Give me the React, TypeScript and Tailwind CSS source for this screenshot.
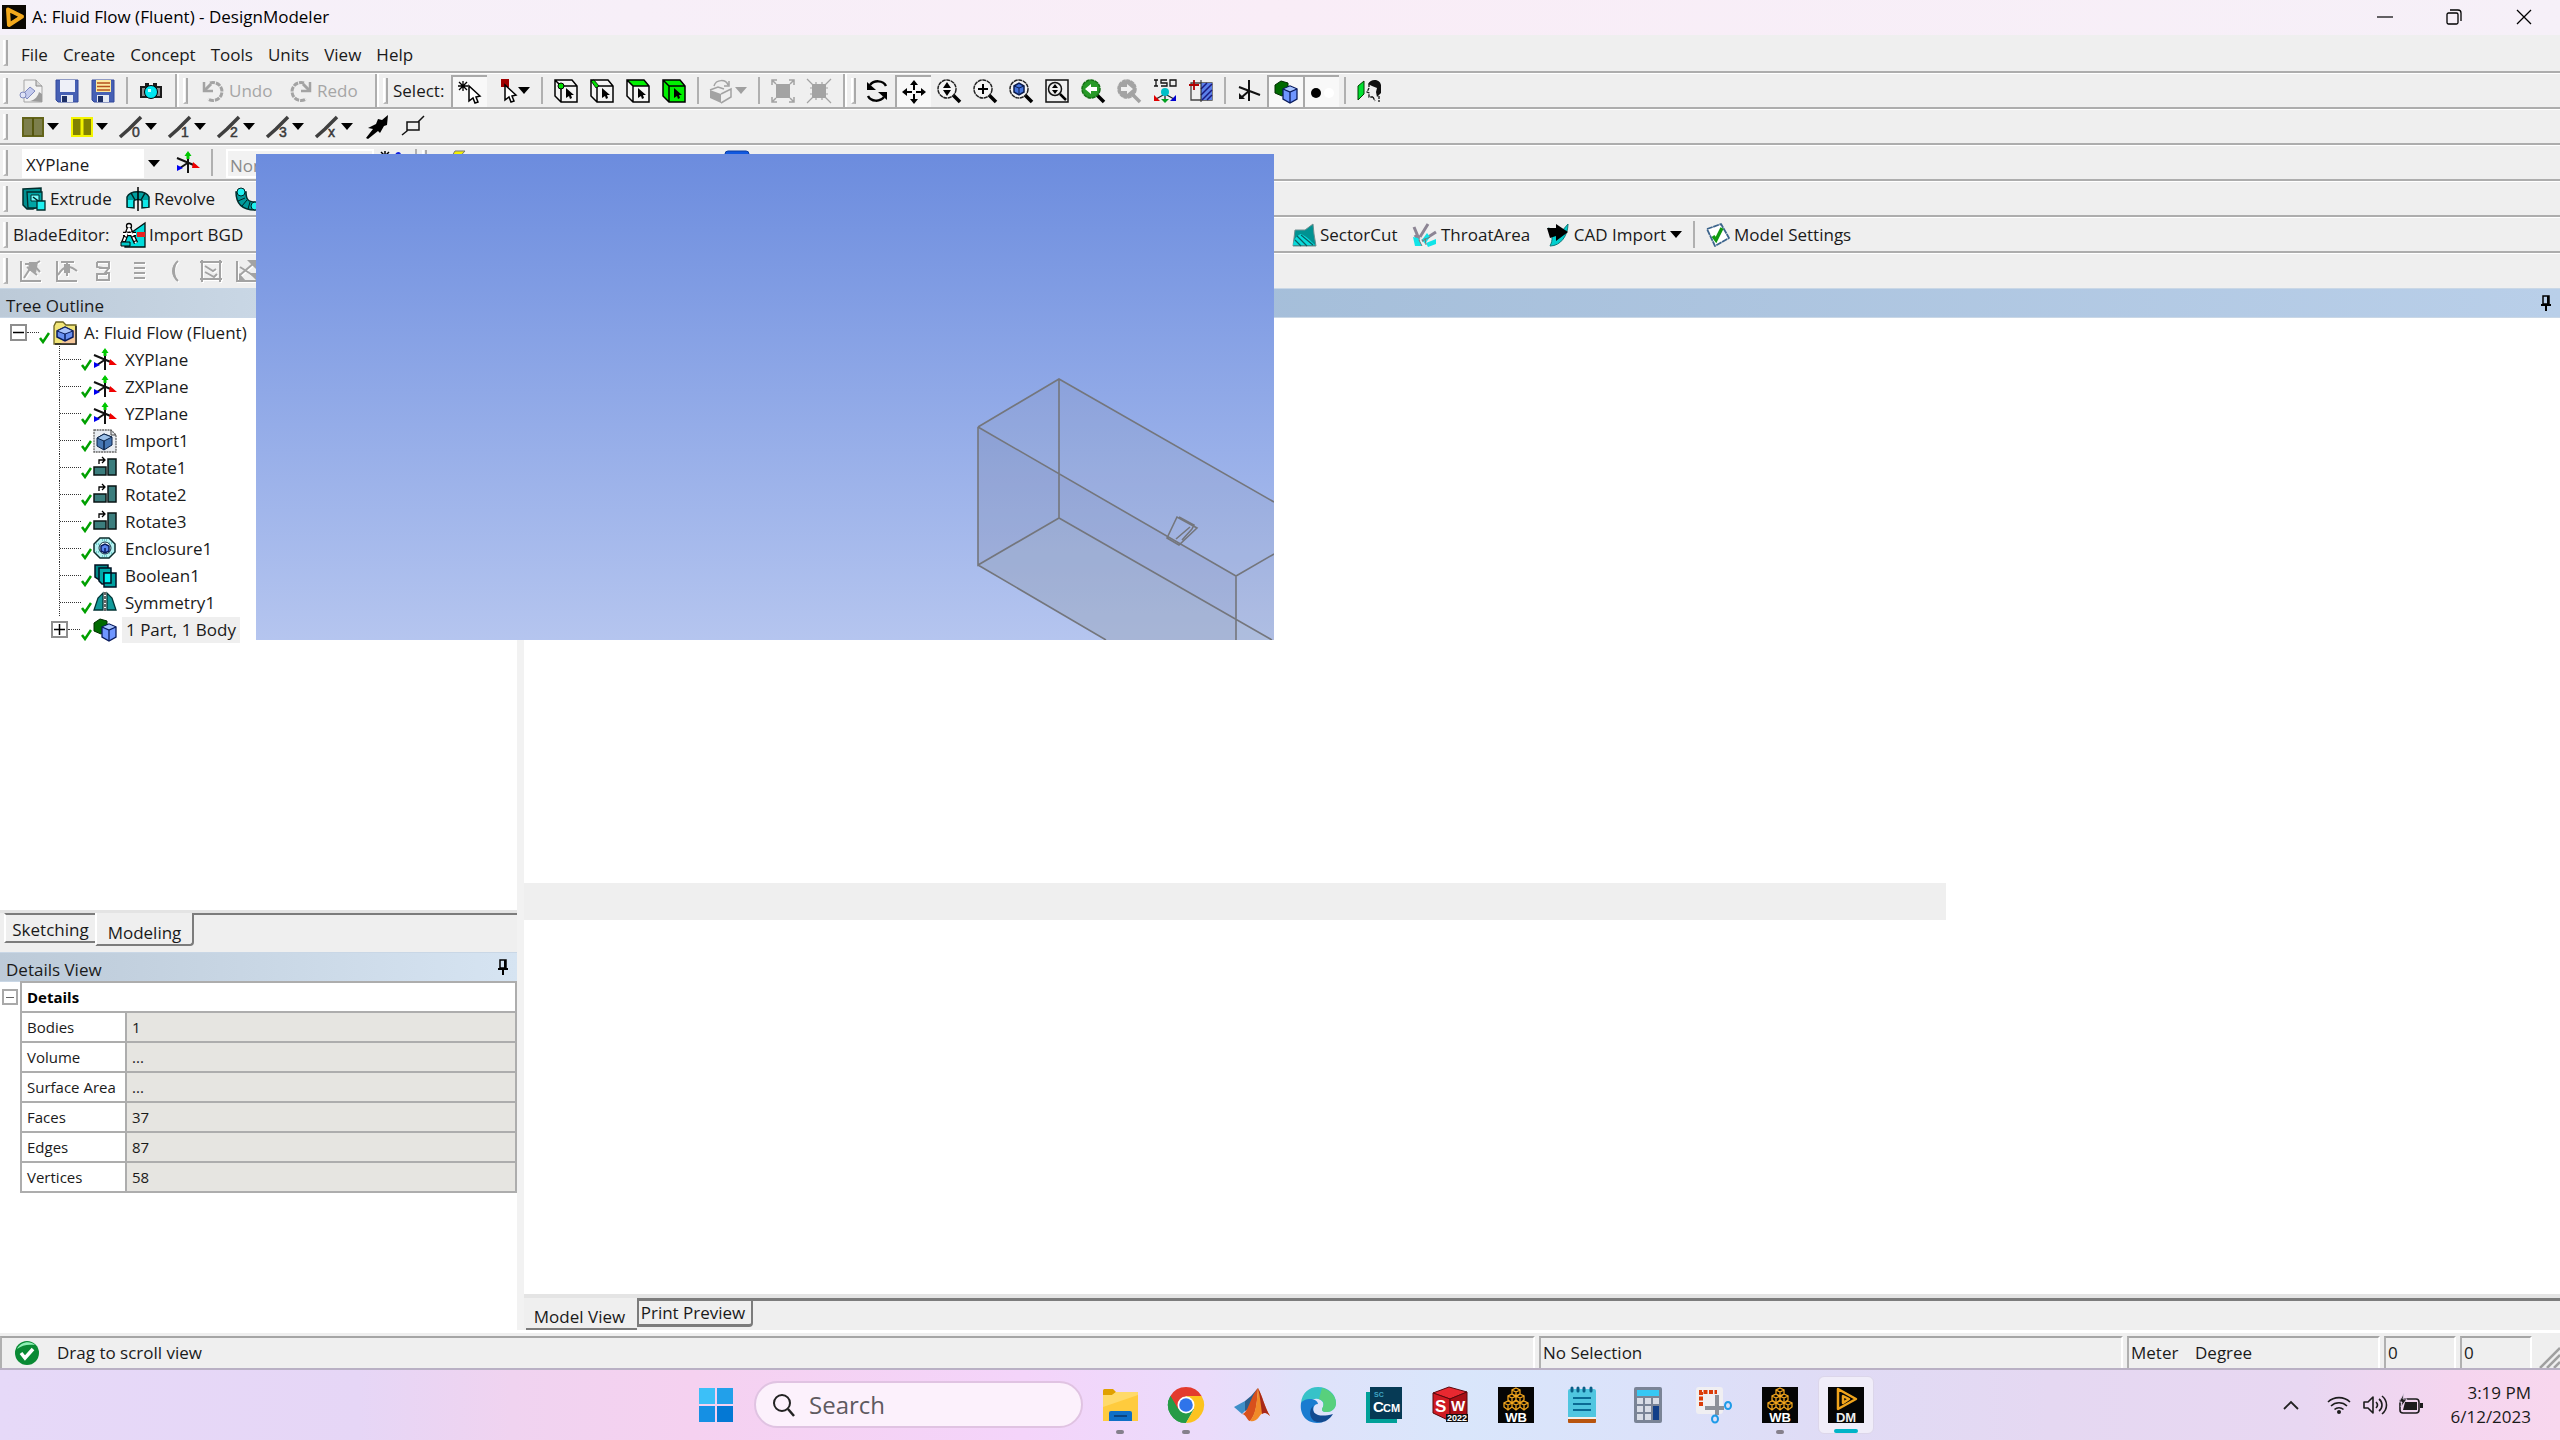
import React from 'react';

type Kids = { children?: React.ReactNode };

const Ico = ({ children, size = 'w-6 h-6', vb = '0 0 24 24' }: Kids & { size?: string; vb?: string }) => (
  <svg viewBox={vb} className={`${size} shrink-0 overflow-visible`} fill="none" aria-hidden="true">
    {children}
  </svg>
);

/* ---------- toolbar primitives ---------- */

const Grip = () => <span className="h-[26px] w-[5px] shrink-0 border-r-2 border-b-2 border-l-2 border-r-[#a9a9a9] border-b-[#b9b9b9] border-l-white" />;

const Sep = () => (
  <span className="flex w-3 shrink-0 justify-center">
    <span className="h-[27px] w-[2px] bg-[#b0b0b0]" />
  </span>
);

const GroupEnd = () => <span className="mr-1 h-[33px] w-[4px] shrink-0 border-x-2 border-l-[#adadad] border-r-white" />;

const Caret = ({ dim }: { dim?: boolean }) => (
  <svg viewBox="0 0 12 7" className="h-[7px] w-3 shrink-0" aria-hidden="true">
    <path d="M0 0h12L6 7z" fill={dim ? '#a0a0a0' : '#000'} />
  </svg>
);

const Btn = ({ label, on, children }: Kids & { label: string; on?: boolean }) => (
  <button
    type="button"
    aria-label={label}
    aria-pressed={on}
    className={`flex w-9 shrink-0 items-center justify-center ${on ? 'h-[32px] border-t-2 border-l-2 border-[#a9a9a9] bg-[#f8f8f8]' : 'h-[32px]'}`}
  >
    {children}
  </button>
);

const Drop = ({ label, dim, children }: Kids & { label: string; dim?: boolean }) => (
  <button type="button" aria-label={label} className="flex h-[32px] w-[49px] shrink-0 items-center gap-[2px] pl-[5px]">
    {children}
    <Caret dim={dim} />
  </button>
);

const Tool = ({ text, w, dim, children }: Kids & { text: string; w: string; dim?: boolean }) => (
  <button type="button" className={`flex h-[32px] shrink-0 items-center gap-1 whitespace-nowrap ${w} ${dim ? 'text-[#a6a6a6]' : ''}`}>
    {children}
    <span>{text}</span>
  </button>
);

const Row = ({ children }: Kids) => (
  <div className="flex h-9 shrink-0 items-center border-t border-b-2 border-t-white border-b-[#adadad] bg-[#efefef] pl-[3px]">{children}</div>
);

/* ---------- icons ---------- */

const DmLogo = () => (
  <Ico>
    <path d="M0 0h24v24H0z" fill="#0b0802" />
    <path d="M6 4.500 20 11.500 7 20z" stroke="#f3a81c" strokeWidth="4" strokeLinejoin="round" />
    <path d="M10 9v6l5-3z" fill="#0b0802" />
  </Ico>
);

const Floppy = ({ lines }: { lines?: boolean }) => (
  <Ico>
    <path d="M1 1h22v22H3l-2-2z" fill="#4660b4" stroke="#32489c" />
    <path d="M5 1h15v12H5z" fill={lines ? '#fbe9a0' : '#eef0f8'} />
    {lines && <path d="M6 4h13M6 7.500h13M6 11h13" stroke="#b4501e" strokeWidth="1.500" />}
    <path d="M6 16h12v7H6z" fill="#e4e9f4" />
    <path d="M7 17h5v6H7z" fill="#1d2f66" />
  </Ico>
);

const NewDoc = () => (
  <Ico>
    <path d="M5 1h12l6 6v16H5z" fill="#f1f1f1" stroke="#a5a5a5" />
    <path d="M17 1v6h6" fill="#d6d6d6" stroke="#8a8a8a" />
    <path d="M11 22c5-1 8-5 9-9l3 2v8z" fill="#9b9b9b" />
    <path d="m4 15 7-7 5 4-8 8z" fill="#c4cbee" stroke="#8089be" strokeLinejoin="round" />
    <circle cx="4" cy="16" r="3" fill="#dfe3f7" stroke="#8089be" />
  </Ico>
);

const Camera = () => (
  <Ico>
    <path d="M1 7h5V4h4v3h4V4h4v3h5v12H1z" fill="#1b1b1b" />
    <path d="M3 9h3v8H3zM18 9h3v8h-3z" fill="#8c8c8c" />
    <circle cx="12" cy="13" r="6.500" fill="#00e6f0" stroke="#000" />
    <path d="M9 10h3v3H9z" fill="#c8ffff" />
  </Ico>
);

const Undo = ({ flip }: { flip?: boolean }) => (
  <Ico>
    <g transform={flip ? 'matrix(-1 0 0 1 24 0)' : undefined} stroke="#a3a3a3">
      <path d="M9 4a9 9 0 1 1-2 16" strokeWidth="3" strokeDasharray="5 1" />
      <path d="M3 3v9h9" strokeWidth="2.500" />
      <path d="m3 12 7-7" strokeWidth="3" />
    </g>
  </Ico>
);

const Cursor = () => <path d="M11 6v15l4-3 2 5 3-1-2-5 4-1z" fill="#fff" stroke="#000" strokeWidth="1.500" />;

const StarCursor = () => (
  <Ico>
    <path d="M5 1v10M0 6h10M1 2l8 8M9 2l-8 8" stroke="#000" strokeWidth="1.300" />
    <Cursor />
  </Ico>
);
const BoxCursor = () => (
  <Ico>
    <path d="M9 0h8v8H9z" fill="#a00000" />
    <g transform="translate(2 0)">
      <Cursor />
    </g>
  </Ico>
);

const SelCube = ({ mode }: { mode: number }) => (
  <Ico>
    <path d="M1 1h17l5 6v16H7l-6-6z" fill={mode === 3 ? '#00f000' : '#f4f4f4'} />
    {mode === 2 && <path d="M1 1h17l5 6H7z" fill="#00f000" />}
    <path d="M1 1h17l5 6v16H7l-6-6zM7 23V7h16M1 1l6 6" stroke="#000" strokeWidth="1.500" />
    {mode === 0 && <circle cx="7" cy="7" r="3" fill="#00e000" stroke="#000" />}
    {mode === 1 && <path d="m1 2 3-1 5 6-3 2z" fill="#00e000" stroke="#000" strokeWidth=".8" />}
    <path d="M12 9v10l3-2 1 3 2-1-1-3h3z" fill="#000" />
  </Ico>
);

const GrayCube = () => (
  <Ico>
    <path d="M5 7c2-7 12-7 14-1m1-4v5h-5" stroke="#a3a3a3" strokeWidth="1.500" />
    <path d="m1 11 11 4v9L1 19z" fill="#a3a3a3" />
    <path d="m12 15 10-5v8l-10 6M1 11l8-3 6 2" stroke="#a3a3a3" strokeWidth="1.500" />
  </Ico>
);
const ExpandSq = () => (
  <Ico>
    <path d="M5 5h14v14H5z" fill="#a3a3a3" />
    <path d="M1 6V1h5M18 1h5v5M23 18v5h-5M6 23H1v-5M1 1l4 4M23 1l-4 4M1 23l4-4M23 23l-4-4" stroke="#a3a3a3" strokeWidth="1.500" />
  </Ico>
);
const ShrinkSq = () => (
  <Ico>
    <path d="M5 5h14v14H5z" fill="#a3a3a3" />
    <path d="M0 0l6 6M24 0l-6 6M0 24l6-6M24 24l-6-6M9 3v3M15 3v3M9 18v3M15 18v3M3 9h3M3 15h3M18 9h3M18 15h3" stroke="#a3a3a3" strokeWidth="1.200" />
  </Ico>
);

const RotateIc = () => (
  <Ico>
    <path d="M21 7C18 1 9 1 5 6" stroke="#000" strokeWidth="2.500" />
    <path d="M2 3v8h9z" fill="#000" />
    <path d="M3 17c3 6 12 6 16 1" stroke="#000" strokeWidth="2.500" />
    <path d="M22 21v-8h-9z" fill="#000" />
  </Ico>
);
const PanIc = () => (
  <Ico>
    <path d="M12 4v6M12 14v6M4 12h6M14 12h6" stroke="#000" strokeWidth="2" />
    <path d="m12 0 4 5H8zM12 24l4-5H8zM0 12l5-4v8zM24 12l-5-4v8z" fill="#000" />
  </Ico>
);
const Lens = ({ children, fill = '#f4f4f4', rim = '#222', handle = '#000' }: Kids & { fill?: string; rim?: string; handle?: string }) => (
  <Ico>
    <path d="m16 16 7 7" stroke={handle} strokeWidth="3.500" />
    <circle cx="10" cy="10" r="9" fill={fill} stroke={rim} strokeWidth="1.500" strokeDasharray="4 .6" />
    {children}
  </Ico>
);
const FitIc = () => (
  <Ico>
    <path d="M1 1h22v22H1z" stroke="#111" strokeWidth="1.500" />
    <circle cx="10" cy="10" r="6.500" stroke="#111" strokeWidth="1.500" />
    <path d="m15 15 6 6" stroke="#000" strokeWidth="2.500" />
    <path d="m10 5 3 4H7zM10 15l3-4H7z" fill="#000" />
  </Ico>
);
const IsoIc = () => (
  <Ico>
    <path d="M1 1h4M3 1v6M1 7h4M14 1H8v3h6v3H8M17 1h6v6h-6z" stroke="#111" strokeWidth="1.300" />
    <path d="m12 15-9 5M12 15l9 5M12 15v7" stroke="#222" strokeWidth="1.300" />
    <path d="M1 16v6h6z" fill="#e00000" />
    <path d="M23 16v6h-6z" fill="#0000d0" />
    <path d="M8 20h8l-4 4z" fill="#00a020" />
    <circle cx="12" cy="13" r="4" fill="#00c0c8" />
  </Ico>
);
const SectionIc = () => (
  <Ico>
    <path d="M2 4h21v17H2z" stroke="#444" strokeWidth="1.300" />
    <path d="M12 4h11v17H12z" fill="#5a7fe8" />
    <path d="m12 10 6-6M12 16 23 5M13 21 23 11M18 21l5-5" stroke="#1a1a80" strokeWidth="1.500" />
    <path d="M12 1v22" stroke="#222" />
    <path d="M0 6h10M5 1v10" stroke="#b00000" strokeWidth="1.800" />
  </Ico>
);
const AxesIc = () => (
  <Ico>
    <path d="M12 1v21M2 8l21 8M13 11 5 18" stroke="#111" strokeWidth="2" />
    <path d="M2 20v-6l6 6z" fill="#111" />
  </Ico>
);
const TriadIc = () => (
  <Ico>
    <path d="M12 4v18M1 7l19 8M13 11 4 17" stroke="#111" strokeWidth="2" />
    <path d="M12 0 8.500 5h7z" fill="#00c800" />
    <path d="M10.500 2h3v6h-3z" fill="#00c800" />
    <path d="m17 11 7 6h-8z" fill="#f00000" />
    <path d="M1 20v-6l6 3z" fill="#0000f0" />
  </Ico>
);
const BodyIc = () => (
  <Ico>
    <path d="m1 5 6-4 7 2v9l-6 4-7-3z" fill="#006a00" stroke="#002c00" />
    <path d="m9 9 7-3 7 3v10l-7 4-7-4z" fill="#6f96ff" stroke="#0a1c5e" strokeWidth="1.300" />
    <path d="m10 9 6-2.500L22 9l-6 2.500z" fill="#a8c4ff" />
    <path d="m9 9 7 3 7-3M16 12v11" stroke="#0a1c5e" strokeWidth="1.300" />
  </Ico>
);
const DotIc = () => (
  <Ico>
    <circle cx="6" cy="13" r="5" fill="#000" />
    <circle cx="19" cy="13" r="5" fill="#fff" />
  </Ico>
);
const LookIc = () => (
  <Ico>
    <path d="m1 7 6-5v13l-6 6z" fill="#00e030" stroke="#003c00" />
    <path d="M11 5c3-6 12-5 13 1v8l-4 4-1-5 1-4-5-2z" fill="#111" />
    <path d="M12 5v4l-2 4 2 1v4h4m0 0 2 4m4-5v6" stroke="#111" strokeWidth="1.300" strokeDasharray="3 1" />
  </Ico>
);

const Plates = ({ hot }: { hot?: boolean }) => (
  <Ico>
    <path d="M2 3h20v18H2z" fill={hot ? '#828200' : '#7d7f4c'} stroke={hot ? '#f4f400' : '#63641a'} strokeWidth="2" />
    <path d="M12 3v18" stroke={hot ? '#f4f400' : '#55560e'} strokeWidth={hot ? 3 : 2} />
  </Ico>
);
const EdgeIc = ({ n }: { n: string }) => (
  <Ico>
    <path d="m1 22 9-8L22 2" stroke="#3f3f3f" strokeWidth="3.500" />
    <text x="13" y="22" fontSize="14" fontFamily="Liberation Sans, Arial, sans-serif" fill="#3a3a3a" stroke="#3a3a3a" strokeWidth=".5">
      {n}
    </text>
  </Ico>
);
const PinArrow = () => (
  <Ico>
    <path d="m23 0-1 10-3 1-4 7-2-2L3 24l-2-1 7-9-5-1 8-4 2-5 4 1z" fill="#000" />
  </Ico>
);
const CornerIc = () => (
  <Ico>
    <path d="M1 20l5-4V7h12v8H6M17 7l6-6" stroke="#111" strokeWidth="1.500" />
  </Ico>
);

const ExtrudeIc = () => (
  <Ico>
    <path d="M1 2 19 1v17l-8 4H5l-4-4z" fill="#008f8f" stroke="#002c2c" strokeWidth="1.500" />
    <path d="M5 5h15v16H6z" fill="#00a5a5" stroke="#002c2c" strokeWidth="1.300" />
    <path d="M9 8h8v6H9z" fill="#7ff" stroke="#002c2c" />
    <path d="m11 10 8 6" stroke="#022" strokeWidth="1.500" />
    <path d="M15 14h8v9h-8z" fill="#20f0f0" stroke="#002c2c" strokeWidth="1.300" />
  </Ico>
);
const RevolveIc = () => (
  <Ico>
    <path d="M1 20V10c3-7 19-7 22 0v10l-7 1v-7c-1-2-7-2-8 0v7z" fill="#00a0a0" stroke="#002c2c" strokeWidth="1.500" />
    <path d="M2 13h5v7H2zM17 13h5v7h-5z" fill="#10e8e8" />
    <path d="m5 6 4 7M19 6l-4 7" stroke="#022" strokeWidth="1.500" />
    <path d="M12 0v24" stroke="#000" strokeWidth="1.500" />
  </Ico>
);
const SweepIc = () => (
  <Ico>
    <path d="M1 5c0 12 6 18 19 18V15c-7 0-9-3-9-10z" fill="#009a9a" stroke="#002c2c" strokeWidth="1.500" />
    <circle cx="6" cy="5" r="4" fill="#20f0f0" stroke="#022" />
    <path d="m3 14 7-3M7 19l5-6M13 22l2-7" stroke="#022" />
    <circle cx="20" cy="19" r="4" fill="#20f0f0" stroke="#022" />
  </Ico>
);
const BgdIc = () => (
  <Ico>
    <path d="M24 0v24H4V14z" fill="#00dcdc" stroke="#011" strokeWidth="1.300" />
    <path d="M16 9h8v5h-8z" fill="#e82020" />
    <circle cx="8" cy="3" r="2.500" fill="#fff" stroke="#000" strokeWidth="1.300" />
    <path d="m8 5-6 15M8 5l7 15M2 11h13" stroke="#000" strokeWidth="4.500" />
    <path d="m8 5-6 15M8 5l7 15M2 11h13" stroke="#fff" strokeWidth="2" strokeDasharray="4 1" />
    <path d="M0 19h9v4H0z" fill="#00c8c8" stroke="#000" />
  </Ico>
);
const SectorIc = () => (
  <Ico>
    <path d="M3 7 13 7l8-6 1 10 2 12H1z" fill="#009292" stroke="#6f8f90" />
    <path d="M1 22c1-6 3-9 8-11 5 2 10 7 14 11z" fill="#08dada" />
    <path d="m3 17 6 6M5 13l10 10M9 12l12 10" stroke="#0a5c60" strokeWidth="1.200" />
  </Ico>
);
const ThroatIc = () => (
  <Ico>
    <path d="m1 4 5 12M7 14 15 1M9 18 23 9M2 12l4 6" stroke="#8d8594" strokeWidth="3" />
    <path d="m0 14 5 1 4 8H2zM9 17l5-7 3 4-5 7zM13 20l10-4v5l-8 3z" fill="#10e4e8" />
    <path d="m6 17 3 6M12 15l1 7M9 18l8-4" stroke="#777" strokeWidth="1" />
  </Ico>
);
const CadIc = () => (
  <Ico>
    <path d="M2 5c5 7 5 12 2 18C15 23 22 12 22 1l-6 7z" fill="#00cfcf" stroke="#177" />
    <path d="M1 5h9V1l12 8-12 9v-5l-6 2z" fill="#000" />
  </Ico>
);
const SettingsIc = () => (
  <Ico>
    <path d="M1 6 15 1l8 14L9 23z" fill="#fff" stroke="#3c648c" strokeWidth="1.800" strokeDasharray="6 .6" strokeLinejoin="round" />
    <path d="m7 13 3 4 6-12" stroke="#109a10" strokeWidth="3.500" />
  </Ico>
);

const G = ({ d, f }: { d: string; f?: string }) => (
  <Ico>
    <path d={d} transform="translate(1 1)" stroke="#fff" strokeWidth="2" />
    <path d={d} stroke="#a3a3a3" strokeWidth="2" />
    {f && <path d={f} fill="#a3a3a3" />}
  </Ico>
);

const Tick = () => (
  <svg viewBox="0 0 11 12" className="mt-[10px] h-3 w-[11px] shrink-0" fill="none" aria-hidden="true">
    <path d="m1 6 3 4 6-9" stroke="#00a000" strokeWidth="2.500" />
  </svg>
);

const FolderIc = () => (
  <Ico>
    <path d="M1 23V5l2-4h7l3 3h10v19z" fill="#f2e679" stroke="#6c6420" strokeWidth="1.300" />
    <path d="M16 9h7v14H8z" fill="#f6c89a" />
    <path d="M23 5v18H2" stroke="#222" strokeWidth="1.500" />
    <path d="m4 10 8-4 8 4v6l-8 4-8-4z" fill="#6a90f0" stroke="#0a1c5e" strokeWidth="1.500" />
    <path d="m4 10 8 3 8-3-8-4z" fill="#a9c2fa" stroke="#0a1c5e" />
    <path d="M12 13v7" stroke="#0a1c5e" strokeWidth="1.500" />
  </Ico>
);
const ImportIc = () => (
  <Ico>
    <path d="M1 1h17l5 5v17H1z" fill="#e9edf2" stroke="#666" strokeWidth="1.300" strokeDasharray="2 .7" />
    <path d="M18 1v5h5" stroke="#444" />
    <path d="m4 9 7-4 8 3v8l-8 5-7-4z" fill="#4677b4" stroke="#0b2348" />
    <path d="m4 9 7-4 8 3-8 4z" fill="#9cc0e8" stroke="#0b2348" />
    <path d="M11 12v9" stroke="#0b2348" strokeWidth="1.500" />
  </Ico>
);
const RotIc = () => (
  <Ico>
    <path d="M1 11h12v8H1zM15 3h8v16h-8z" fill="#3b7d7d" stroke="#0a1414" strokeWidth="1.500" />
    <path d="M6 8V4h5M9 1l3 3-3 3" stroke="#000" strokeWidth="1.300" />
  </Ico>
);
const EnclIc = () => (
  <Ico>
    <path d="M7 1h9l6 6v8l-6 6H7l-6-6V7z" fill="#b5f3f3" stroke="#0c2c2c" strokeWidth="1.500" />
    <path d="M3 7h4M16 6h4M3 15h4M16 16h4M9 3h5M9 19h5" stroke="#2ba4a4" strokeDasharray="1 1" />
    <circle cx="12" cy="11" r="6" fill="#f4ffff" stroke="#134" />
    <path d="m8 9 4-2 4 2v5l-4 2-4-2z" fill="#5d86f0" stroke="#0a1c5e" strokeWidth="1.500" />
    <path d="M12 11v5" stroke="#0a1c5e" strokeWidth="1.500" />
  </Ico>
);
const BoolIc = () => (
  <Ico>
    <path d="M2 1h13v16l-4 2-9-6z" fill="#008a8a" stroke="#012" strokeWidth="1.500" />
    <path d="M6 4h12v16H9l-3-3z" fill="#00a8a8" stroke="#012" strokeWidth="1.500" />
    <path d="M11 9h12v14H11z" fill="#00a0a0" stroke="#012" strokeWidth="1.500" />
    <path d="M11 9h7v10h-7z" fill="#00f4f4" stroke="#012" strokeWidth="1.500" />
  </Ico>
);
const SymIc = () => (
  <Ico>
    <path d="M10 2v17H1l4-12zM14 2v17h9L19 7z" fill="#129a9a" stroke="#033" strokeWidth="1.300" />
    <path d="M12 1v19" stroke="#000" strokeWidth="1.200" strokeDasharray="3 1" />
  </Ico>
);

const Pin = () => (
  <svg viewBox="0 0 12 16" className="h-4 w-3" fill="none" aria-hidden="true">
    <path d="M3 1h6v8H3z" stroke="#000" strokeWidth="1.500" />
    <path d="M8 1v8M1 10h10M6 10v6" stroke="#000" strokeWidth="2" />
  </svg>
);

/* ---------- tree ---------- */

const nodes: { name: string; icon: React.ReactNode }[] = [
  { name: 'XYPlane', icon: <TriadIc /> },
  { name: 'ZXPlane', icon: <TriadIc /> },
  { name: 'YZPlane', icon: <TriadIc /> },
  { name: 'Import1', icon: <ImportIc /> },
  { name: 'Rotate1', icon: <RotIc /> },
  { name: 'Rotate2', icon: <RotIc /> },
  { name: 'Rotate3', icon: <RotIc /> },
  { name: 'Enclosure1', icon: <EnclIc /> },
  { name: 'Boolean1', icon: <BoolIc /> },
  { name: 'Symmetry1', icon: <SymIc /> },
];

const Expander = ({ open }: { open: boolean }) => (
  <button type="button" aria-label={open ? 'Collapse' : 'Expand'} className="flex h-[17px] w-[17px] shrink-0 items-center justify-center border-2 border-[#8e8e8e] bg-white">
    <svg viewBox="0 0 11 11" className="h-[11px] w-[11px]" aria-hidden="true">
      <path d={open ? 'M0 5.500h11' : 'M0 5.500h11M5.500 0v11'} stroke="#000" strokeWidth="1.500" />
    </svg>
  </button>
);

const Tree = () => (
  <div className="min-h-0 flex-1 bg-white pt-px">
    <div className="flex h-[27px] items-center pl-[10px]">
      <Expander open />
      <span className="w-3 border-t border-dotted border-[#333]" />
      <Tick />
      <span className="ml-[3px] flex">
        <FolderIc />
      </span>
      <span className="ml-[7px] whitespace-nowrap">A: Fluid Flow (Fluent)</span>
    </div>
    <ul className="ml-[59px]">
      {nodes.map((n) => (
        <li key={n.name} className="flex h-[27px] items-center border-l border-dotted border-[#333]">
          <span className="w-[21px] border-t border-dotted border-[#333]" />
          <Tick />
          <span className="ml-[1px] flex">{n.icon}</span>
          <span className="ml-2">{n.name}</span>
        </li>
      ))}
    </ul>
    <div className="flex h-[27px] items-center pl-[51px]">
      <Expander open={false} />
      <span className="mr-[1px] w-3 border-t border-dotted border-[#333]" />
      <Tick />
      <span className="ml-[1px] flex">
        <BodyIc />
      </span>
      <span className="ml-[5px] bg-[#efefef] px-1 leading-[26px] whitespace-nowrap">1 Part, 1 Body</span>
    </div>
  </div>
);

const details = [
  ['Bodies', '1'],
  ['Volume', '...'],
  ['Surface Area', '...'],
  ['Faces', '37'],
  ['Edges', '87'],
  ['Vertices', '58'],
];

/* ---------- model canvas ---------- */

const Viewport = () => (
  <div className="absolute top-[154px] left-64 h-[486px] w-[1018px] bg-linear-to-b from-[#6c8cde] to-[#b5c5ef]">
    <svg viewBox="0 0 1018 486" className="h-full w-full" fill="none" role="img" aria-label="Enclosure model">
      <path d="M722 273 803 225l215 123v138H850L722 411z" fill="#808080" fillOpacity=".1" />
      <path d="M722 273 980 422v64H850L722 411z" fill="#606a90" fillOpacity=".1" />
      <path d="M722 411 803 364l213 122H850z" fill="#b0c0c0" fillOpacity=".12" />
      <g stroke="#74767c" strokeWidth="1.600">
        <path d="M722 273 803 225 1018 348M722 273v138l81-47V225M803 364l213 122M722 411l128 75M722 273l258 149v64M980 422l38-22" />
        <path d="m911 384 10-21 20 11-18 17zM911 384l12 7M923 363l15 8-2 4M926 386l10-11M920 385l14-12" />
      </g>
    </svg>
  </div>
);

/* ---------- taskbar icons ---------- */

const B = 'w-9 h-9';
const Explorer = () => (
  <Ico size={B} vb="0 0 36 36">
    <path d="M1 3.500A1.500 1.500 0 0 1 2.500 2H11l4 4-4 3H1z" fill="#e0a000" />
    <path d="M1 8h9l4-3h22v29H1z" fill="#ffcb3d" />
    <path d="M1 8h9l4-3h22v3L1 20z" fill="#ffda6a" />
    <path d="M7 34v-8a2 2 0 0 1 2-2h19a2 2 0 0 1 2 2v8z" fill="#0f6fc6" />
    <path d="M12 29h13" stroke="#0a4480" strokeWidth="2" />
  </Ico>
);
const Chrome = () => (
  <Ico size={B} vb="0 0 36 36">
    <path d="M2.400 9A18 18 0 0 0 18 36l8-14-8-4z" fill="#259b46" />
    <path d="M26 22 18 36a18 18 0 0 0 15.600-27H18z" fill="#fcc31e" />
    <path d="M2.400 9A18 18 0 0 1 33.600 9H18l-8 13z" fill="#e33b2e" />
    <path d="M2.400 9 10 22l8 4v10A18 18 0 0 1 2.400 9z" fill="#259b46" />
    <circle cx="18" cy="18" r="8.500" fill="#fff" />
    <circle cx="18" cy="18" r="6.800" fill="#2f74ea" />
  </Ico>
);
const Matlab = () => (
  <Ico size={B} vb="0 0 36 36">
    <path d="m0 20 11-6 5 5-8 8z" fill="#3f8fc8" />
    <path d="m11 14 6-5 7-8-8 20-5 3z" fill="#2b5e8c" />
    <path d="M8 27c6 0 8-17 16-26-1 16-2 27-8 33-3 0-3-6-8-7z" fill="#d8501c" />
    <path d="M24 1c4 7 7 20 12 28-4-4-7-5-11 1-3 4-6 5-9 4 6-7 7-20 8-33z" fill="#f08a28" />
    <path d="M24 1c4 7 7 20 12 28-3-3-5-4-8-2-1-8-2-18-4-26z" fill="#a8281a" />
  </Ico>
);
const Edge = () => (
  <Ico size={B} vb="0 0 36 36">
    <path d="M1 16C2 6 9 0 18 0c10 0 18 7 18 16 0 6-5 9-9 9-5 0-6-2-4-5 2-5-3-9-8-8C8 12 3 15 1 16z" fill="#37c2c8" />
    <path d="M22 1c8 2 14 8 14 15 0 6-5 9-9 9-5 0-6-2-4-5 2-5-1-7-4-8z" fill="#58d07c" />
    <path d="M1 16c3-5 16-6 17 1-5 0-6 6-3 11 2 4 6 7 8 7C10 39-1 30 1 16z" fill="#1a7cd0" />
    <path d="M13 19c-2 8 6 12 20 8-5 8-12 10-19 7-5-4-5-11-1-15z" fill="#124a90" />
  </Ico>
);
const tx = { fontFamily: 'Liberation Sans, Arial, sans-serif', fontWeight: 700 };
const Ccm = () => (
  <Ico size={B} vb="0 0 36 36">
    <path d="M0 5h31v31H0z" fill="#00a098" />
    <path d="M4 0h32v32H4z" fill="#063a55" />
    <text x="8" y="10" fontSize="7" fill="#3fa6c4" {...tx}>SC</text>
    <text x="7" y="25" fontSize="15" fill="#fff" {...tx}>C</text>
    <text x="17" y="25" fontSize="11" fill="#fff" {...tx}>CM</text>
  </Ico>
);
const Sw = () => (
  <Ico size={B} vb="0 0 36 36">
    <path d="M1 6 17 0l18 5-17 7z" fill="#e82830" stroke="#5a080c" />
    <path d="M1 6l17 6v22L1 26z" fill="#cf1a22" stroke="#5a080c" />
    <path d="M18 12 35 5v22l-17 7z" fill="#a80f16" stroke="#5a080c" />
    <text x="3" y="25" fontSize="17" fill="#fff" {...tx}>S</text>
    <text x="19" y="24" fontSize="15" fill="#fff" {...tx}>W</text>
    <path d="M14 27h22v8H14z" fill="#111" />
    <text x="15" y="34" fontSize="9" fill="#fff" {...tx}>2022</text>
  </Ico>
);
const hex = (x: number, y: number) => `M${x} ${y - 4}l4 2v4l-4 3-4-3v-4zM${x - 4} ${y - 2}l4 2 4-2M${x} ${y}v5`;
const Wb = () => (
  <Ico size={B} vb="0 0 36 36">
    <path d="M0 0h36v36H0z" fill="#050505" />
    <path d={`${hex(18, 5)}${hex(14, 11)}${hex(22, 11)}${hex(10, 18)}${hex(18, 18)}${hex(26, 18)}`} stroke="#f0a41c" strokeWidth="1.300" />
    <text x="18" y="35" fontSize="13" textAnchor="middle" fill="#fff" {...tx}>WB</text>
  </Ico>
);
const Dm = () => (
  <Ico size={B} vb="0 0 36 36">
    <path d="M0 0h36v36H0z" fill="#050505" />
    <path d="M10 2 28 12 10 22zM15 9v7l6-4z" stroke="#f0a41c" strokeWidth="2.500" strokeLinejoin="round" />
    <text x="18" y="35" fontSize="13" textAnchor="middle" fill="#eee" {...tx}>DM</text>
  </Ico>
);
const Notes = () => (
  <Ico size={B} vb="0 0 36 36">
    <path d="M4 30h28v5a1 1 0 0 1-1 1H5a1 1 0 0 1-1-1z" fill="#b8540e" />
    <path d="M4 30h28v2H4z" fill="#f4f0ea" />
    <path d="M4 4a2 2 0 0 1 2-2h24a2 2 0 0 1 2 2v26H4z" fill="#50c6e0" />
    <path d="M9 11h18M9 17h18M9 23h18" stroke="#0a6a94" strokeWidth="2" />
    <path d="M8 1v3M14 1v3M20 1v3M27 1v3" stroke="#0a5f88" strokeWidth="3" strokeLinecap="round" />
  </Ico>
);
const Calc = () => (
  <Ico size={B} vb="0 0 36 36">
    <rect x="4" width="28" height="36" rx="2" fill="#7a8496" />
    <path d="M7 3h22v6H7z" fill="#36c8f4" />
    <path d="M7 11h6v6H7zM15 11h6v6h-6zM23 11h6v6h-6zM7 19h6v6H7zM15 19h6v6h-6zM7 27h6v6H7zM15 27h6v6h-6z" fill="#d9dde6" />
    <path d="M23 19h6v14h-6z" fill="#123f88" />
  </Ico>
);
const Snip = () => (
  <Ico size={B} vb="0 0 36 36">
    <rect width="27" height="27" rx="3" fill="#f0eff2" />
    <path d="M5 19V5h16" stroke="#dc3c08" strokeWidth="4" strokeDasharray="4 1.500" />
    <path d="M21 8v20M9 21h19" stroke="#8d9098" strokeWidth="4" />
    <ellipse cx="19" cy="32" rx="3" ry="3.500" stroke="#1e9be8" strokeWidth="2" />
    <ellipse cx="32" cy="18.500" rx="3" ry="3.500" stroke="#1e9be8" strokeWidth="2" />
  </Ico>
);

const apps: { name: string; icon: React.ReactNode; open?: boolean; active?: boolean }[] = [
  { name: 'File Explorer', icon: <Explorer />, open: true },
  { name: 'Chrome', icon: <Chrome />, open: true },
  { name: 'MATLAB', icon: <Matlab /> },
  { name: 'Edge', icon: <Edge /> },
  { name: 'STAR-CCM', icon: <Ccm /> },
  { name: 'SolidWorks', icon: <Sw /> },
  { name: 'Workbench', icon: <Wb /> },
  { name: 'Notepad', icon: <Notes /> },
  { name: 'Calculator', icon: <Calc /> },
  { name: 'Snipping Tool', icon: <Snip /> },
  { name: 'Workbench project', icon: <Wb />, open: true },
  { name: 'DesignModeler', icon: <Dm />, active: true },
];

const Cell = ({ w, children }: Kids & { w: string }) => (
  <div className={`flex h-8 items-center whitespace-nowrap border-t-2 border-r-2 border-l-2 border-t-[#a5a5a5] border-r-white border-l-[#b0b0b0] pl-[2px] ${w}`}>{children}</div>
);

const panelHead = 'flex h-[30px] shrink-0 items-center justify-between border-t border-b border-[#c9d7e6]';

export default function App() {
  return (
    <div className="relative flex min-h-screen flex-col overflow-hidden bg-[#efefef] font-['Open_Sans','Noto_Sans',sans-serif] text-[17px] leading-6 text-[#1a1a1a]">
      <header className="flex h-[35px] shrink-0 items-center bg-linear-to-r from-[#f5f1f9] via-[#f9edf7] to-[#f6f0f8] pb-px pl-[2px]">
        <DmLogo />
        <h1 className="ml-[6px] flex-1 text-black">A: Fluid Flow (Fluent) - DesignModeler</h1>
        <button type="button" aria-label="Minimize" className="flex w-[69px] justify-center">
          <svg viewBox="0 0 16 16" className="h-4 w-4"><path d="M0 8h16" stroke="#000" strokeWidth="1.200" /></svg>
        </button>
        <button type="button" aria-label="Restore" className="flex w-[69px] justify-center">
          <svg viewBox="0 0 16 16" className="h-4 w-4" fill="none">
            <rect x="1" y="4" width="11" height="11" rx="1.500" stroke="#000" strokeWidth="1.300" />
            <path d="M4 1h8a3 3 0 0 1 3 3v8" stroke="#000" strokeWidth="1.300" />
          </svg>
        </button>
        <button type="button" aria-label="Close" className="flex w-[72px] justify-center">
          <svg viewBox="0 0 16 16" className="h-4 w-4"><path d="m1 1 14 14M15 1 1 15" stroke="#000" strokeWidth="1.300" /></svg>
        </button>
      </header>

      <nav className="flex h-[38px] shrink-0 items-center border-b-2 border-[#adadad] pl-[3px]">
        <Grip />
        <div className="ml-[13px] flex gap-[15px] pt-1">
          {['File', 'Create', 'Concept', 'Tools', 'Units', 'View', 'Help'].map((m) => (
            <button key={m} type="button">{m}</button>
          ))}
        </div>
      </nav>

      <Row>
        <Grip />
        <span className="w-[5px]" />
        <Btn label="New"><NewDoc /></Btn>
        <Btn label="Save"><Floppy /></Btn>
        <Btn label="Save project"><Floppy lines /></Btn>
        <Sep />
        <Btn label="Capture"><Camera /></Btn>
        <span className="w-[6px]" />
        <GroupEnd />
        <Grip />
        <div className="flex pl-[13px]">
          <Tool text="Undo" w="w-[88px]" dim><Undo /></Tool>
          <Tool text="Redo" w="w-[86px]" dim><Undo flip /></Tool>
        </div>
        <GroupEnd />
        <Grip />
        <span className="w-[63px] pl-[5px]">Select:</span>
        <Btn label="New selection" on><StarCursor /></Btn>
        <Drop label="Select mode"><BoxCursor /></Drop>
        <Sep />
        <Btn label="Select points"><SelCube mode={0} /></Btn>
        <Btn label="Select edges"><SelCube mode={1} /></Btn>
        <Btn label="Select faces"><SelCube mode={2} /></Btn>
        <Btn label="Select bodies"><SelCube mode={3} /></Btn>
        <Sep />
        <Drop label="Extend selection" dim><GrayCube /></Drop>
        <Sep />
        <Btn label="Expand"><ExpandSq /></Btn>
        <Btn label="Shrink"><ShrinkSq /></Btn>
        <span className="w-[6px]" />
        <GroupEnd />
        <Grip />
        <span className="w-[3px]" />
        <Btn label="Rotate"><RotateIc /></Btn>
        <Btn label="Pan" on><PanIc /></Btn>
        <Btn label="Zoom"><Lens><path d="m10 3 4 6H6zM10 17l4-6H6z" fill="#000" /></Lens></Btn>
        <Btn label="Box zoom"><Lens><path d="M10 5v10M5 10h10" stroke="#000" strokeWidth="2" /></Lens></Btn>
        <Btn label="Zoom to fit"><Lens><path d="m5 7 5-3 5 3v6l-5 3-5-3z" fill="#4674dc" stroke="#0a1c4e" strokeWidth="1.500" /><path d="m5 7 5 2 5-2M10 9v7" stroke="#0a1c4e" /></Lens></Btn>
        <Btn label="Magnifier"><FitIc /></Btn>
        <Btn label="Previous view"><Lens fill="#279a27" rim="#147014"><path d="m4 10 6-5v3h6v4h-6v3z" fill="#fff" /></Lens></Btn>
        <Btn label="Next view"><Lens fill="#a3a3a3" rim="#a3a3a3" handle="#a3a3a3"><path d="m16 10-6-5v3H4v4h6v3z" fill="#f0f0f0" /></Lens></Btn>
        <Btn label="Isometric view"><IsoIc /></Btn>
        <Btn label="Section plane"><SectionIc /></Btn>
        <Sep />
        <Btn label="Display plane"><AxesIc /></Btn>
        <Btn label="Display model" on><BodyIc /></Btn>
        <Btn label="Display points" on><DotIc /></Btn>
        <Sep />
        <Btn label="Look at"><LookIc /></Btn>
      </Row>

      <Row>
        <Grip />
        <span className="w-2" />
        <Drop label="Face color"><Plates /></Drop>
        <Drop label="Edge color"><Plates hot /></Drop>
        {['0', '1', '2', '3', 'x'].map((n) => (
          <Drop key={n} label={`Edge joints ${n}`}><EdgeIc n={n} /></Drop>
        ))}
        <Btn label="Edge direction"><PinArrow /></Btn>
        <Btn label="Display vertices"><CornerIc /></Btn>
      </Row>

      <Row>
        <Grip />
        <div className="relative mt-px ml-[14px] flex h-[29px] w-[142px] items-center bg-white">
          <select aria-label="Active plane" className="h-full w-full appearance-none bg-transparent pt-[3px] pl-[4px]">
            <option>XYPlane</option>
          </select>
          <span className="pointer-events-none absolute right-0 flex h-full w-5 items-center justify-center bg-[#efefef]">
            <Caret />
          </span>
        </div>
        <span className="w-[6px]" />
        <Btn label="New plane"><TriadIc /></Btn>
        <Sep />
        <select aria-label="Active sketch" disabled className="mt-px ml-[8px] h-[29px] w-[148px] appearance-none border-2 border-white bg-[#f2f2f2] pt-[3px] pl-[2px] text-[#8a8a8a] opacity-100">
          <option>None</option>
        </select>
        <Btn label="New sketch">
          <Ico>
            <path d="M5 0v10M0 5h10M1 1l8 8M9 1l-8 8" stroke="#000" strokeWidth="1.500" />
            <path d="M15 4c1-4 6-4 6 0v16h-6z" fill="#1020e0" />
          </Ico>
        </Btn>
        <Sep />
        <Grip />
        <span className="w-[9px]" />
        <Btn label="Generate"><Ico><path d="M13 0h10L13 11h8L5 24l5-11H5z" fill="#f4f000" stroke="#777" /></Ico></Btn>
        <span className="w-[247px]" />
        <Btn label="Share topology"><Ico><rect width="24" height="22" rx="3" fill="#1058e0" stroke="#0a3ca0" /></Ico></Btn>
      </Row>

      <Row>
        <Grip />
        <div className="flex pl-[14px]">
          <Tool text="Extrude" w="w-[104px]"><ExtrudeIc /></Tool>
          <Tool text="Revolve" w="w-[103px]"><RevolveIc /></Tool>
          <Btn label="Sweep"><SweepIc /></Btn>
        </div>
      </Row>

      <Row>
        <Grip />
        <span className="w-[113px] shrink-0 pl-[5px]">BladeEditor:</span>
        <Tool text="Import BGD" w="w-[1171px]"><BgdIc /></Tool>
        <Tool text="SectorCut" w="w-[121px]"><SectorIc /></Tool>
        <Tool text="ThroatArea" w="w-[133px]"><ThroatIc /></Tool>
        <button type="button" className="flex h-[32px] w-[142px] shrink-0 items-center gap-[2px] whitespace-nowrap">
          <CadIc />
          <span className="w-[96px]">CAD Import</span>
          <Caret />
        </button>
        <Sep />
        <span className="w-[6px]" />
        <Tool text="Model Settings" w="w-[150px]"><SettingsIc /></Tool>
      </Row>

      <div className="flex h-[35px] shrink-0 items-center border-t border-white pl-[3px]">
        <Grip />
        <span className="w-[5px]" />
        <Btn label="Meridional contour"><G d="M2 2v20h20M5 19 14 5l7 8M6 5h10l5-3M8 8l10 8" f="M10 3h9l-2 11-8-3z" /></Btn>
        <Btn label="Blade angle"><G d="M2 2v20h20M12 3v14M6 3h13M3 16c6-10 12-10 19-4" f="M9 5h6v9H9z" /></Btn>
        <Btn label="Sections"><G d="M6 3h12v6H8M6 3v5l6 1M18 9l-4 5h4v7H6v-6h10" /></Btn>
        <Btn label="Layers"><G d="M7 4h11M7 9h11M7 14h11M7 19h11" /></Btn>
        <Btn label="Curve"><G d="M15 2c-6 5-6 15 0 20" f="M15 2c-8 4-8 16 0 20-4-6-4-14 0-20z" /></Btn>
        <Btn label="Surface"><G d="M1 3h22M1 20h22M3 1v22M21 1v22M6 7l8 5 3-2M6 13l9 5 3-3" /></Btn>
        <Btn label="Move"><G d="M2 2v20h20M5 16 19 4M5 8l14 9" f="M12 1h9v9zM4 14v8h7zM14 14h8v8z" /></Btn>
      </div>

      <main className="flex min-h-0 flex-1">
        <section className="flex w-[517px] shrink-0 flex-col">
          <div className={`${panelHead} bg-linear-to-r from-[#bccad8] to-[#d6e4f2] pr-2 pl-[6px]`}>
            <h2 className="pt-[6px]">Tree Outline</h2>
          </div>
          <Tree />
          <div className="h-[3px] shrink-0 bg-[#e4e4e4]" />
          <div className="flex h-[39px] shrink-0 items-start bg-[#efefef] pl-1" role="tablist">
            <button type="button" role="tab" aria-selected="false" className="h-[30px] w-[91px] border-t-2 border-b-2 border-l-2 border-t-[#7c7c7c] border-b-[#7c7c7c] border-l-white pt-[4px] leading-[22px]">
              Sketching
            </button>
            <button type="button" role="tab" aria-selected="true" className="h-[33px] w-[99px] rounded-br border-r-2 border-b-2 border-l-2 border-r-[#7c7c7c] border-b-[#7c7c7c] border-l-white pt-[9px] leading-[22px]">
              Modeling
            </button>
            <span className="h-0 flex-1 border-t-2 border-[#7c7c7c]" />
          </div>
          <div className="flex h-[378px] shrink-0 flex-col bg-white">
            <div className={`${panelHead} bg-linear-to-r from-[#bccad8] to-[#d6e4f2] pr-2 pl-[6px]`}>
              <h2 className="pt-[6px]">Details View</h2>
              <button type="button" aria-label="Pin panel"><Pin /></button>
            </div>
            <div className="flex items-start text-[15px]">
              <button type="button" aria-label="Collapse details" className="mt-[7px] ml-[2px] flex h-4 w-4 shrink-0 items-center justify-center border-2 border-[#a9a9a9]">
                <span className="h-px w-2 bg-[#666]" />
              </button>
              <table className="-mt-px ml-[2px] flex-1 table-fixed border-collapse">
                <colgroup>
                  <col className="w-[105px]" />
                  <col />
                </colgroup>
                <tbody>
                  <tr className="h-[30px]">
                    <th colSpan={2} className="border-2 border-[#adadad] p-0 pl-[5px] text-left font-bold text-black">Details</th>
                  </tr>
                  {details.map(([k, v]) => (
                    <tr key={k} className="h-[30px]">
                      <th scope="row" className="border-2 border-[#adadad] p-0 pl-[5px] text-left font-normal whitespace-nowrap">{k}</th>
                      <td className="border-2 border-[#adadad] bg-[#e6e5e1] p-0 pl-[5px]">{v}</td>
                    </tr>
                  ))}
                </tbody>
              </table>
            </div>
          </div>
        </section>

        <div className="w-[7px] shrink-0 bg-[#f2f2f2]" />

        <section className="flex min-w-0 flex-1 flex-col">
          <div className={`${panelHead} bg-linear-to-r from-[#9ab5d1] to-[#b9cfe9] pr-2`}>
            <button type="button" aria-label="Pin panel" className="ml-auto"><Pin /></button>
          </div>
          <div className="flex-1 bg-white pt-[565px]">
            <div className="h-[37px] w-[1422px] max-w-full bg-[#efefef]" />
          </div>
          <div className="flex h-9 shrink-0 items-start border-t-4 border-[#e4e4e4] bg-[#efefef] pl-[2px]" role="tablist">
            <button type="button" role="tab" aria-selected="true" className="h-8 w-[111px] border-b-2 border-[#7c7c7c] pt-[7px] pr-1 leading-[22px]">Model View</button>
            <button type="button" role="tab" aria-selected="false" className="h-[29px] w-[116px] rounded-br border-t-[3px] border-r-2 border-b-[3px] border-l-2 border-[#7c7c7c] pr-1 leading-[24px]">Print Preview</button>
            <span className="h-0 flex-1 border-t-[3px] border-[#7c7c7c]" />
          </div>
        </section>
      </main>

      <footer className="shrink-0">
        <div className="flex h-10 items-center gap-1 border-t-[3px] border-b-2 border-t-white border-b-[#b9b0c4] bg-[#efefef] pt-[3px]">
          <Cell w="flex-1">
            <span className="w-[11px]" />
            <Ico>
              <circle cx="12" cy="12" r="12" fill="#0a8a34" />
              <path d="M2 8C5 1 15-1 20 4c-7-1-13 0-18 4z" fill="#8df0b4" />
              <path d="m6 12 4 5 8-9" stroke="#fff" strokeWidth="3.500" />
            </Ico>
            <span className="ml-[18px]">Drag to scroll view</span>
          </Cell>
          <Cell w="w-[584px]">No Selection</Cell>
          <Cell w="w-[253px]">
            <span className="w-[64px]">Meter</span>
            <span>Degree</span>
          </Cell>
          <Cell w="w-[72px]">0</Cell>
          <Cell w="w-[72px]">0</Cell>
          <svg viewBox="0 0 24 24" className="h-6 w-6 self-end" aria-hidden="true">
            <path d="M4 24 24 4M11 24l13-13M18 24l6-6" stroke="#a0a0a0" strokeWidth="2.500" />
          </svg>
        </div>

        <div className="flex h-[70px] items-center bg-[linear-gradient(90deg,#e6d9f8_0%,#e6d6f6_14%,#f0d3f0_20%,#f5d1f0_27%,#f4d4fa_40%,#ebdbfb_47%,#dfe2fa_51%,#d9e6fb_57%,#dbe2fa_64%,#e0dbf5_72%,#e5d8f2_80%,#e8d7f2_90%,#f5d5ef_96%,#f8d7ee_100%)] pb-px">
          <button type="button" aria-label="Start" className="ml-[698px]">
            <Ico size={B} vb="0 0 36 36">
              <path d="M1 1h16v16H1z" fill="#3cc0f8" />
              <path d="M19 1h16v16H19z" fill="#22a0ea" />
              <path d="M1 19h16v16H1z" fill="#1590e4" />
              <path d="M19 19h16v16H19z" fill="#0478d4" />
            </Ico>
          </button>
          <label className="ml-5 flex h-[47px] w-[329px] items-center rounded-full border-2 border-[#e0c3e2] bg-[#fcf1fc] pl-4">
            <svg viewBox="0 0 24 24" className="h-6 w-6" fill="none" aria-hidden="true">
              <circle cx="10" cy="10" r="8" stroke="#222" strokeWidth="2" />
              <path d="m16 16 6 7" stroke="#222" strokeWidth="2.500" />
            </svg>
            <input aria-label="Search" placeholder="Search" className="ml-[13px] w-60 bg-transparent text-[24px] outline-none placeholder:text-[#5f5a60]" />
          </label>
          <div className="ml-[4px] flex">
            {apps.map((a) => (
              <div key={a.name} className="flex w-[66px] justify-center">
                <button
                  type="button"
                  aria-label={a.name}
                  className={`relative flex h-[58px] w-14 items-center justify-center rounded-md ${a.active ? 'border border-[#dcd6ea] bg-[#f0edf9]' : ''}`}
                >
                  {a.icon}
                  {a.open && <span className="absolute bottom-0 h-1 w-2 rounded-full bg-[#85808c]" />}
                  {a.active && <span className="absolute bottom-0 h-1 w-6 rounded-full bg-[#00b4c8]" />}
                </button>
              </div>
            ))}
          </div>
          <div className="ml-auto flex items-center pr-[29px]">
            <button type="button" aria-label="Show hidden icons" className="mr-7">
              <svg viewBox="0 0 16 10" className="h-[10px] w-4" fill="none"><path d="m1 9 7-7 7 7" stroke="#222" strokeWidth="1.800" /></svg>
            </button>
            <button type="button" aria-label="Network, sound and battery" className="flex gap-3">
              <Ico>
                <path d="M1 9a16 16 0 0 1 22 0M4 13a11.500 11.500 0 0 1 16 0M7.500 16.500a6.500 6.500 0 0 1 9 0" stroke="#1c1c1c" strokeWidth="1.600" />
                <circle cx="12" cy="19" r="2" fill="#1c1c1c" />
              </Ico>
              <Ico>
                <path d="M1 9h4l5-5v16l-5-5H1z" stroke="#1c1c1c" strokeWidth="1.600" strokeLinejoin="round" />
                <path d="M13 9c2 2 2 4 0 6M16 6c4 3 4 9 0 12M19 3c6 5 6 13 0 18" stroke="#1c1c1c" strokeWidth="1.600" />
              </Ico>
              <Ico>
                <rect x="1" y="6" width="19" height="14" rx="3" stroke="#1c1c1c" strokeWidth="1.600" />
                <path d="M6 9h12v8H4zM21 10h3v5h-3z" fill="#1c1c1c" />
                <path d="M5 0 0 9h3l-1 5 6-8H4z" fill="#1c1c1c" stroke="#ecd7f2" strokeWidth=".8" />
              </Ico>
            </button>
            <div className="ml-[27px] text-right leading-6">
              <div>3:19 PM</div>
              <div>6/12/2023</div>
            </div>
          </div>
        </div>
      </footer>

      <Viewport />
    </div>
  );
}
